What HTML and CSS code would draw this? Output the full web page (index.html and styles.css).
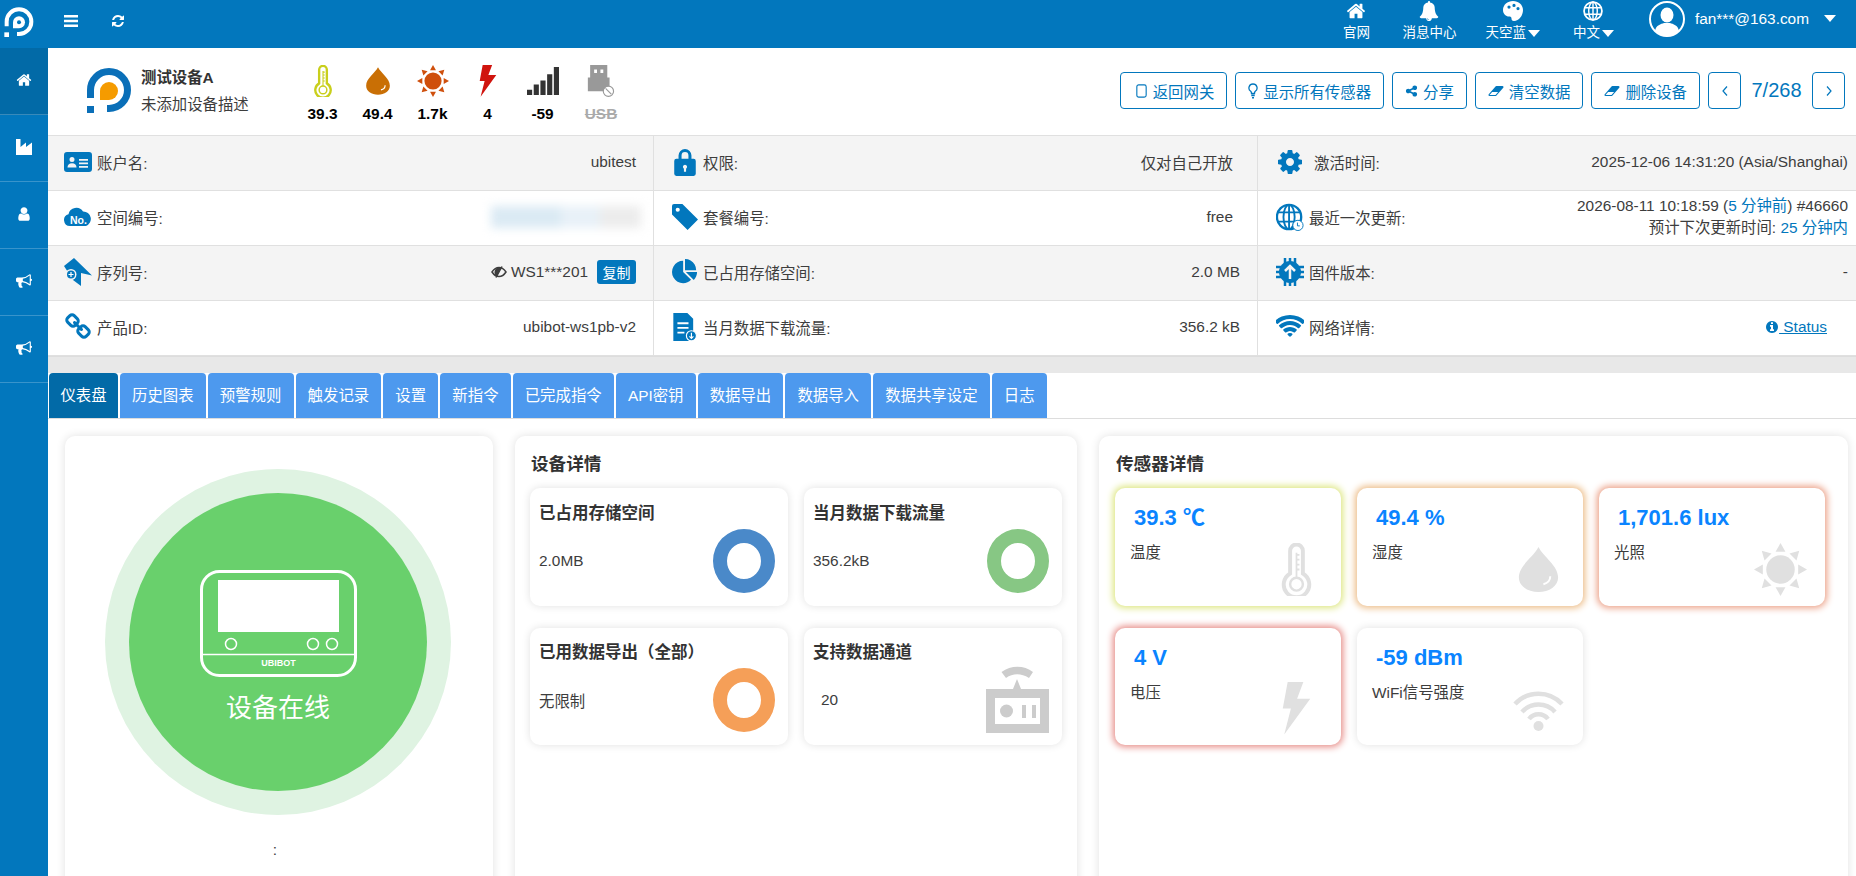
FILE: index.html
```html
<!DOCTYPE html>
<html lang="zh-CN">
<head>
  <meta charset="UTF-8">
  <meta name="viewport" content="width=device-width, initial-scale=1.0">
  <title>测试设备A</title>
  <link rel="stylesheet" href="styles.css">
</head>
<body>

<!-- icon sprite -->
<svg class="sprite" xmlns="http://www.w3.org/2000/svg">
  <symbol id="i-bars" viewBox="0 0 14 12"><path d="M0 0h14v2.4H0zM0 4.8h14v2.4H0zM0 9.600h14V12H0z"/></symbol>
  <symbol id="i-refresh" viewBox="0 0 1792 1792"><path d="M1639 1056q0 5-1 7-64 268-268 434.500t-478 166.500q-146 0-282.500-55t-243.500-157l-129 129q-19 19-45 19t-45-19-19-45v-448q0-26 19-45t45-19h448q26 0 45 19t19 45-19 45l-137 137q71 66 161 102t187 36q134 0 250-65t186-179q11-17 53-117 8-23 30-23h192q13 0 22.500 9.500t9.500 22.500zm25-800v448q0 26-19 45t-45 19h-448q-26 0-45-19t-19-45 19-45l138-138q-148-137-349-137-134 0-250 65t-186 179q-11 17-53 117-8 23-30 23h-199q-13 0-22.500-9.500t-9.500-22.500v-7q65-268 270-434.500t480-166.500q146 0 284 55.500t245 156.500l130-129q19-19 45-19t45 19 19 45z"/></symbol>
  <symbol id="i-home" viewBox="0 0 1792 1792"><path d="M1472 992v480q0 26-19 45t-45 19h-384v-384h-256v384h-384q-26 0-45-19t-19-45v-480q0-1 .5-3t.5-3l575-474 575 474q1 2 1 6zm223-69l-62 74q-8 9-21 11h-3q-13 0-21-7l-692-577-692 577q-12 8-24 7-13-2-21-11l-62-74q-8-10-7-23.500t11-21.500l719-599q32-26 76-26t76 26l244 204v-195q0-14 9-23t23-9h192q14 0 23 9t9 23v408l219 182q10 8 11 21.500t-7 23.500z"/></symbol>
  <symbol id="i-bell" viewBox="0 0 1792 1792"><path d="M912 1696q0-16-16-16-59 0-101.500-42.500t-42.500-101.500q0-16-16-16t-16 16q0 73 51.500 124.500t124.500 51.500q16 0 16-16zm816-288q0 52-38 90t-90 38h-448q0 106-75 181t-181 75-181-75-75-181h-448q-52 0-90-38t-38-90q50-42 91-88t85-119.500 74.500-158.500 50-206 19.500-260q0-152 117-282.500t307-158.500q-8-19-8-39 0-40 28-68t68-28 68 28 28 68q0 20-8 39 190 28 307 158.500t117 282.500q0 139 19.500 260t50 206 74.500 158.500 85 119.500 91 88z"/></symbol>
  <symbol id="i-user" viewBox="0 0 1792 1792"><path d="M1536 1399q0 109-62.500 187t-150.500 78h-854q-88 0-150.500-78t-62.500-187q0-85 8.500-160.500t31.500-152 58.500-131 94-89 134.500-34.500q131 128 313 128t313-128q76 0 134.500 34.500t94 89 58.500 131 31.500 152 8.500 160.500zm-256-887q0 159-112.500 271.500t-271.500 112.500-271.500-112.500-112.500-271.500 112.500-271.500 271.500-112.500 271.500 112.500 112.500 271.500z"/></symbol>
  <symbol id="i-bullhorn" viewBox="0 0 1792 1792"><path d="M1664 640q53 0 90.500 37.500t37.500 90.500-37.500 90.500-90.500 37.500v384q0 52-38 90t-90 38q-417-347-812-380-58 19-91 66t-31 100.500 40 92.500q-20 33-23 65.500t6 58 33.500 55 48 50 61.500 50.500q-29 58-111.500 83t-168.500 11.500-132-55.500q-7-23-29.500-87.500t-32-94.500-23-89-15-101 3.500-98.500 22-110.500h-122q-66 0-113-47t-47-113v-192q0-66 47-113t113-47h480q435 0 896-384 52 0 90 38t38 90v384zm-128 604v-954q-394 302-768 343v270q377 42 768 341z"/></symbol>
  <symbol id="i-industry" viewBox="0 0 16 16"><path d="M0 0h4.500v8L10 3.500V8l6-4.500V16H0z"/></symbol>
  <symbol id="i-palette" viewBox="0 0 20 20"><path fill-rule="evenodd" d="M10 0c5.500 0 10 3.800 10 9 0 5.500-4 11-9 11-2 0-2.500-1.200-2.500-2.500 0-1.500-1-2-2.500-2C3 15.500 0 13 0 9c0-5.200 4.500-9 10-9zM6 4.500a1.600 1.600 0 1 0 0 3.200 1.600 1.600 0 0 0 0-3.200zM11 2.800a1.600 1.600 0 1 0 0 3.200 1.600 1.600 0 0 0 0-3.200zM15 6a1.600 1.600 0 1 0 0 3.200A1.600 1.600 0 0 0 15 6z"/></symbol>
  <symbol id="i-globe" viewBox="0 0 28 28">
    <circle cx="14" cy="14" r="12.500" fill="none" stroke="currentColor" stroke-width="2.500"/>
    <ellipse cx="14" cy="14" rx="6" ry="12.500" fill="none" stroke="currentColor" stroke-width="2"/>
    <path d="M14 1v26M2 9.500h24M2 18.500h24" fill="none" stroke="currentColor" stroke-width="2"/>
  </symbol>
  <symbol id="i-globe-clock" viewBox="0 0 30 30">
    <circle cx="14" cy="15" r="13" fill="none" stroke="currentColor" stroke-width="2.500"/>
    <ellipse cx="14" cy="15" rx="6" ry="13" fill="none" stroke="currentColor" stroke-width="2"/>
    <path d="M14 2v26M2 10h24M2 20h24" fill="none" stroke="currentColor" stroke-width="2"/>
    <circle cx="23.500" cy="24" r="5.500" fill="#fff" stroke="currentColor" stroke-width="1"/>
    <path d="M23 21v3.500h2.500" fill="none" stroke="currentColor" stroke-width="1"/>
  </symbol>
  <symbol id="i-share" viewBox="0 0 1792 1792"><path d="M1344 1024q133 0 226.500 93.500t93.500 226.500-93.500 226.500-226.500 93.500-226.500-93.500-93.500-226.500q0-12 2-34l-360-180q-92 86-218 86-133 0-226.500-93.500t-93.500-226.500 93.500-226.500 226.500-93.500q126 0 218 86l360-180q-2-22-2-34 0-133 93.500-226.500t226.500-93.500 226.500 93.500 93.500 226.500-93.500 226.500-226.500 93.500q-126 0-218-86l-360 180q2 22 2 34t-2 34l360 180q92-86 218-86z"/></symbol>
  <symbol id="i-eraser" viewBox="0 0 2048 1792"><path d="M960 1408l336-384h-768l-336 384h768zm1013-1077q15 34 9.500 71.500t-30.500 65.500l-896 1024q-38 44-96 44h-768q-38 0-69.500-20.500t-47.500-54.500q-15-34-9.500-71.500t30.500-65.500l896-1024q38-44 96-44h768q38 0 70 20.500t47 54.500z"/></symbol>
  <symbol id="i-tablet" viewBox="0 0 12 15"><rect x="1" y="1" width="10" height="13" rx="2" fill="none" stroke="currentColor" stroke-width="1.200"/></symbol>
  <symbol id="i-bulb" viewBox="0 0 10 16"><path d="M5 1a4 4 0 0 0-2.300 7.300c.5.400.8 1.200.8 2.200h3c0-1 .3-1.800.8-2.200A4 4 0 0 0 5 1z" fill="none" stroke="currentColor" stroke-width="1.300"/><path d="M3.300 11.500h3.400v1.700H3.300zM4 14h2v1.500H4z"/></symbol>
  <symbol id="i-left" viewBox="0 0 8 12"><path d="M6 1.500L2 6l4 4.500" fill="none" stroke="currentColor" stroke-width="1.200"/></symbol>
  <symbol id="i-right" viewBox="0 0 8 12"><path d="M2 1.500L6 6l-4 4.500" fill="none" stroke="currentColor" stroke-width="1.200"/></symbol>
  <symbol id="i-idcard" viewBox="0 0 28 20"><path fill-rule="evenodd" d="M3 0h22a3 3 0 0 1 3 3v14a3 3 0 0 1-3 3H3a3 3 0 0 1-3-3V3a3 3 0 0 1 3-3zM8 5a2.500 2.500 0 1 0 0 5 2.500 2.500 0 0 0 0-5zM3.500 15.500h9c0-2.500-1.500-4.200-4.500-4.200s-4.500 1.700-4.500 4.200zM15 7v1.800h9V7zM15 10.500v1.800h9v-1.800zM15 14v1.800h9V14z"/></symbol>
  <symbol id="i-cloud" viewBox="0 0 28 18"><path d="M6 18a6 6 0 0 1-1.500-11.800A8 8 0 0 1 19 3.500 7.500 7.500 0 0 1 22 18z"/><text x="14.500" y="15.500" class="cloud-text">No.</text></symbol>
  <symbol id="i-serial" viewBox="0 0 28 28"><path d="M10 0l18 17.500L17 15v13l-8-6-9-14z"/><circle cx="7" cy="16.500" r="5.500" fill="#f4f4f4"/><circle cx="7" cy="16.500" r="4" fill="#0277bd"/><path d="M4.500 16.500h5M7 14v5" stroke="#fff" stroke-width="1.200"/></symbol>
  <symbol id="i-link" viewBox="0 0 1792 1792"><path d="M1520 1216q0-40-28-68l-208-208q-28-28-68-28-42 0-72 32 3 3 19 18.500t21.500 21.500 15 19 13 25.500 3.500 27.500q0 40-28 68t-68 28q-15 0-27.500-3.500t-25.500-13-19-15-21.500-21.500-18.500-19q-33 31-33 73 0 40 28 68l206 207q27 27 68 27 40 0 68-26l147-146q28-28 28-67zm-703-705q0-40-28-68l-206-207q-28-28-68-28-39 0-68 27l-147 146q-28 28-28 67 0 40 28 68l208 208q27 27 68 27 42 0 72-31-3-3-19-18.500t-21.500-21.500-15-19-13-25.500-3.500-27.500q0-40 28-68t68-28q15 0 27.500 3.500t25.500 13 19 15 21.500 21.500 18.500 19q33-31 33-73zm895 705q0 120-85 203l-147 146q-83 83-203 83-121 0-204-85l-206-207q-83-83-83-203 0-123 88-209l-88-88q-86 88-208 88-120 0-204-84l-208-208q-84-84-84-204t85-203l147-146q83-83 203-83 121 0 204 85l206 207q83 83 83 203 0 123-88 209l88 88q86-88 208-88 120 0 204 84l208 208q84 84 84 204z"/></symbol>
  <symbol id="i-lock" viewBox="0 0 20 26"><path fill-rule="evenodd" d="M4 10V7a6 6 0 0 1 12 0v3h2a2 2 0 0 1 2 2v12a2 2 0 0 1-2 2H2a2 2 0 0 1-2-2V12a2 2 0 0 1 2-2zM6.800 10h6.400V7a3.200 3.200 0 0 0-6.400 0zM10 15.500a2 2 0 0 0-1 3.700V22h2v-2.800a2 2 0 0 0-1-3.700z"/></symbol>
  <symbol id="i-tag" viewBox="0 0 25 25"><path fill-rule="evenodd" d="M0 2a2 2 0 0 1 2-2h8l15 15-10 10L0 10zM5.500 3.500a2 2 0 1 0 0 4 2 2 0 0 0 0-4z"/></symbol>
  <symbol id="i-pie" viewBox="0 0 1792 1792"><path d="M768 890l546 546q-106 108-247.500 168t-298.500 60q-209 0-385.500-103t-279.500-279.500-103-385.500 103-385.500 279.500-279.500 385.500-103v762zm187 6h773q0 157-60 298.500t-168 247.500zm709-128h-768v-768q209 0 385.500 103t279.500 279.500 103 385.500z"/></symbol>
  <symbol id="i-doc" viewBox="0 0 20 24"><path fill-rule="evenodd" d="M0 0h12l5 5v19H0zM3.500 8v1.600H13V8zM3.500 12v1.600H13V12zM3.500 16v1.600h6V16z"/><circle cx="15.500" cy="19.500" r="4.300" fill="#0277bd" stroke="#fff" stroke-width="1"/><path d="M15.500 17v4.500M13.800 20l1.700 1.700 1.700-1.700" fill="none" stroke="#fff" stroke-width="1"/></symbol>
  <symbol id="i-gear" viewBox="0 0 1792 1792"><path d="M1152 896q0-106-75-181t-181-75-181 75-75 181 75 181 181 75 181-75 75-181zm512-109v222q0 12-8 23t-20 13l-185 28q-19 54-39 91 35 50 107 138 10 12 10 25t-9 23q-27 37-99 108t-94 71q-12 0-26-9l-138-108q-44 23-91 38-16 136-29 186-7 28-36 28h-222q-14 0-24.500-8.500t-11.500-21.500l-28-184q-49-16-90-37l-141 107q-10 9-25 9-14 0-25-11-126-114-165-168-7-10-7-23 0-12 8-23 15-21 51-66.500t54-70.500q-27-50-41-99l-183-27q-13-2-21-12.500t-8-23.500v-222q0-12 8-23t19-13l186-28q14-46 39-92-40-57-107-138-10-12-10-24 0-10 9-23 26-36 98.500-107.500t94.500-71.500q13 0 26 10l138 107q44-23 91-38 16-136 29-186 7-28 36-28h222q14 0 24.500 8.500t11.500 21.500l28 184q49 16 90 37l142-107q9-9 24-9 13 0 25 10 129 119 165 170 7 8 7 22 0 12-8 23-15 21-51 66.500t-54 70.500q26 50 41 98l183 28q13 2 22 12.500t9 23.500z"/></symbol>
  <symbol id="i-chip" viewBox="0 0 28 28">
    <path d="M0 9h28M0 14h28M0 19h28M9 0v28M14 0v28M19 0v28" stroke="currentColor" stroke-width="2.500"/>
    <circle cx="14" cy="14" r="11"/>
    <path d="M14 21V8M9 13l5-5 5 5" fill="none" stroke="#f4f4f4" stroke-width="2.500"/>
  </symbol>
  <symbol id="i-wifi" viewBox="0 0 1792 1792"><path d="M896 1523q-20 0-93-73.500t-73-93.500q0-32 62.500-54t103.500-22 103.500 22 62.500 54q0 20-73 93.500t-93 73.500zm270-271q-2 0-40-25t-101.500-50-128.500-25-128.500 25-101 50-40.500 25q-18 0-93.500-75t-75.500-93q0-13 10-23 78-77 196-121t233-44 233 44 196 121q10 10 10 23 0 18-75.500 93t-93.500 75zm273-272q-11 0-23-8-136-105-252-154.500t-268-49.500q-85 0-170.500 22t-149 53-113.500 62-79 53-31 22q-17 0-92-75t-75-93q0-12 10-22 132-132 320-205t380-73 380 73 320 205q10 10 10 22 0 18-75 93t-92 75zm271-271q-11 0-22-9-179-157-371.500-236.500t-420.500-79.500-420.500 79.500-371.500 236.500q-11 9-22 9-17 0-92.500-75t-75.500-93q0-13 10-23 187-186 445-288t527-102 527 102 445 288q10 10 10 23 0 18-75.500 93t-92.500 75z"/></symbol>
  <symbol id="i-info" viewBox="0 0 1792 1792"><path d="M1152 1376v-160q0-14-9-23t-23-9h-96v-512q0-14-9-23t-23-9h-320q-14 0-23 9t-9 23v160q0 14 9 23t23 9h96v320h-96q-14 0-23 9t-9 23v160q0 14 9 23t23 9h448q14 0 23-9t9-23zm-128-896v-160q0-14-9-23t-23-9h-192q-14 0-23 9t-9 23v160q0 14 9 23t23 9h192q14 0 23-9t9-23zm640 416q0 209-103 385.500t-279.500 279.500-385.500 103-385.500-103-279.500-279.500-103-385.500 103-385.500 279.500-279.500 385.500-103 385.500 103 279.500 279.500 103 385.500z"/></symbol>
  <symbol id="i-eye-off" viewBox="0 0 16 12"><path d="M1 6c2-3 4.500-4.500 7-4.500S13 3 15 6c-2 3-4.500 4.500-7 4.500S3 9 1 6z" fill="none" stroke="currentColor" stroke-width="1.500"/><path d="M3.500 6a4.500 4.500 0 0 1 6.500-4L6 10.500A4.500 4.500 0 0 1 3.500 6z"/><path d="M5 11.500L11 .5" stroke="currentColor" stroke-width="1.500"/></symbol>
  <symbol id="i-thermo" viewBox="0 0 30 54">
    <path d="M8.500 31V8a6.500 6.500 0 0 1 13 0v23a13 13 0 1 1-13 0z" fill="none" stroke="currentColor" stroke-width="4"/>
    <circle cx="15" cy="42" r="6.500" fill="none" stroke="currentColor" stroke-width="2.500"/>
    <path d="M15 10v26M15 12h3M15 17h3M15 22h3M15 27h3" fill="none" stroke="currentColor" stroke-width="1.800"/>
  </symbol>
  <symbol id="i-drop" viewBox="-6 -4 54 54"><path d="M21 0C26 10 41 19 41 31 41 40 32 46 21 46S1 40 1 31C1 19 16 10 21 0z"/><path d="M33 30c0 4-3 7-7 8" fill="none" stroke="#fff" stroke-width="2"/></symbol>
  <symbol id="i-sun" viewBox="0 0 54 54">
    <circle cx="27" cy="27" r="14.500"/>
    <polygon points="27,0 32,9 22,9"/>
    <polygon points="27,0 32,9 22,9" transform="rotate(45 27 27)"/>
    <polygon points="27,0 32,9 22,9" transform="rotate(90 27 27)"/>
    <polygon points="27,0 32,9 22,9" transform="rotate(135 27 27)"/>
    <polygon points="27,0 32,9 22,9" transform="rotate(180 27 27)"/>
    <polygon points="27,0 32,9 22,9" transform="rotate(225 27 27)"/>
    <polygon points="27,0 32,9 22,9" transform="rotate(270 27 27)"/>
    <polygon points="27,0 32,9 22,9" transform="rotate(315 27 27)"/>
  </symbol>
  <symbol id="i-bolt" viewBox="0 0 28 54"><polygon points="5,0 21,0 14.600,17 28,17 1.500,53.500 8.300,27 0,27"/></symbol>
  <symbol id="i-signal" viewBox="0 0 31 27"><path d="M0 22h5v5H0zM6.500 17h5v10h-5zM13 13h5v14h-5zM19.500 7h5v20h-5zM26 0h5v27h-5z"/></symbol>
  <symbol id="i-usb" viewBox="0 0 23 28"><path fill-rule="evenodd" d="M2 0h15v11h2v12H0V11h2zM5.500 4v3h2.500V4zM11 4v3h2.500V4z"/><circle cx="18" cy="23" r="4.500" fill="#fff" stroke="currentColor" stroke-width="1"/><path d="M15.500 20.500l5 5" stroke="currentColor"/></symbol>
  <symbol id="i-sig-wifi" viewBox="0 0 53 53">
    <path d="M3 22a32 32 0 0 1 47 0M10 30a22 22 0 0 1 33 0M17 37a12 12 0 0 1 19 0" fill="none" stroke="currentColor" stroke-width="4.500"/>
    <circle cx="26.500" cy="44" r="5"/>
  </symbol>
  <symbol id="i-radio" viewBox="0 0 63 69">
    <path d="M15.500 8C25 1 38 1 47 8l-4 6C35 9 27 9 20 14z"/>
    <path d="M31 15l4 10H27z"/>
    <path fill-rule="evenodd" d="M0 25h63v44H0zM9 34v26h45V34z"/>
    <circle cx="20.500" cy="47" r="6.500"/>
    <path d="M36 41h4v13h-4zM46 41h4v13h-4z"/>
  </symbol>
</svg>

<header class="topbar">
  <svg class="top-logo" viewBox="0 0 44 45" width="30" height="30">
    <path d="M3.500 29V22A18.500 18.500 0 1 1 22 40.500H19" fill="none" stroke="#fff" stroke-width="6"/>
    <path d="M0 38h7v7H0z" fill="#fff"/>
    <path d="M13 32V23a9 9 0 1 1 9 9z" fill="#fff"/>
    <circle cx="22" cy="23" r="3" fill="#0277bd"/>
  </svg>
  <svg class="top-btn top-bars"><use href="#i-bars"/></svg>
  <svg class="top-btn top-refresh"><use href="#i-refresh"/></svg>

  <nav class="top-nav">
    <a class="nav-item nav-site"><svg class="nav-icon"><use href="#i-home"/></svg><span>官网</span></a>
    <a class="nav-item"><svg class="nav-icon"><use href="#i-bell"/></svg><span>消息中心</span></a>
    <a class="nav-item"><svg class="nav-icon"><use href="#i-palette"/></svg><span>天空蓝<i class="caret"></i></span></a>
    <a class="nav-item nav-lang"><svg class="nav-icon"><use href="#i-globe"/></svg><span>中文<i class="caret"></i></span></a>
  </nav>

  <div class="account">
    <span class="avatar"><svg viewBox="0 0 36 36" width="36" height="36"><circle cx="18" cy="18" r="17" fill="#0277bd" stroke="#fff" stroke-width="2"/><ellipse cx="18" cy="14" rx="6.500" ry="7.500" fill="#fff"/><path d="M6 30c1-6 6-7 9-8h6c3 1 8 2 9 8a16 16 0 0 1-24 0z" fill="#fff"/></svg></span>
    <span class="account-mail">fan***@163.com</span>
    <i class="caret caret-account"></i>
  </div>
</header>

<div class="layout">
  <aside class="sidebar">
    <a class="side-item active"><svg class="side-icon"><use href="#i-home"/></svg></a>
    <a class="side-item"><svg class="side-icon"><use href="#i-industry"/></svg></a>
    <a class="side-item"><svg class="side-icon"><use href="#i-user"/></svg></a>
    <a class="side-item"><svg class="side-icon"><use href="#i-bullhorn"/></svg></a>
    <a class="side-item"><svg class="side-icon"><use href="#i-bullhorn"/></svg></a>
  </aside>

  <main class="content">
    <!-- Device header -->
    <section class="device-head">
      <svg class="device-logo" viewBox="0 0 44 45" width="44" height="45">
        <path d="M3.500 30V22A18.500 18.500 0 1 1 22 40.500H20" fill="none" stroke="#0a6fb8" stroke-width="7"/>
        <path d="M0 38h7v7H0z" fill="#0a6fb8"/>
        <path d="M13 32V23a9 9 0 1 1 9 9z" fill="#f59b00"/>
      </svg>
      <div class="device-name">
        <div class="device-title">测试设备A</div>
        <div class="device-desc">未添加设备描述</div>
      </div>

      <div class="readings">
        <div class="reading"><svg class="reading-icon c-temp"><use href="#i-thermo"/></svg><b>39.3</b></div>
        <div class="reading"><svg class="reading-icon c-hum"><use href="#i-drop"/></svg><b>49.4</b></div>
        <div class="reading"><svg class="reading-icon c-sun"><use href="#i-sun"/></svg><b>1.7k</b></div>
        <div class="reading"><svg class="reading-icon c-bolt"><use href="#i-bolt"/></svg><b>4</b></div>
        <div class="reading"><svg class="reading-icon c-signal"><use href="#i-signal"/></svg><b>-59</b></div>
        <div class="reading reading-off"><svg class="reading-icon c-usb"><use href="#i-usb"/></svg><b>USB</b></div>
      </div>

      <div class="actions">
        <button class="btn"><svg class="btn-icon btn-tablet"><use href="#i-tablet"/></svg>返回网关</button>
        <button class="btn"><svg class="btn-icon btn-bulb"><use href="#i-bulb"/></svg>显示所有传感器</button>
        <button class="btn"><svg class="btn-icon"><use href="#i-share"/></svg>分享</button>
        <button class="btn"><svg class="btn-icon btn-eraser"><use href="#i-eraser"/></svg>清空数据</button>
        <button class="btn"><svg class="btn-icon btn-eraser"><use href="#i-eraser"/></svg>删除设备</button>
        <button class="btn btn-page"><svg class="btn-chevron"><use href="#i-left"/></svg></button>
        <span class="page-count">7/268</span>
        <button class="btn btn-page"><svg class="btn-chevron"><use href="#i-right"/></svg></button>
      </div>
    </section>

    <!-- Info table -->
    <section class="info">
      <div class="info-row">
        <div class="cell"><svg class="cell-icon"><use href="#i-idcard"/></svg><span>账户名:</span><span class="cell-value">ubitest</span></div>
        <div class="cell"><svg class="cell-icon"><use href="#i-lock"/></svg><span>权限:</span><span class="cell-value">仅对自己开放</span></div>
        <div class="cell"><svg class="cell-icon icon-gear"><use href="#i-gear"/></svg><span>激活时间:</span><span class="cell-value">2025-12-06 14:31:20 (Asia/Shanghai)</span></div>
      </div>
      <div class="info-row">
        <div class="cell"><svg class="cell-icon"><use href="#i-cloud"/></svg><span>空间编号:</span><span class="cell-value blurred"><i class="blur-a"></i><i class="blur-b"></i><i class="blur-c"></i></span></div>
        <div class="cell"><svg class="cell-icon"><use href="#i-tag"/></svg><span>套餐编号:</span><span class="cell-value">free</span></div>
        <div class="cell"><svg class="cell-icon"><use href="#i-globe-clock"/></svg><span>最近一次更新:</span>
          <div class="cell-value update">
            <div>2026-08-11 10:18:59 (<a class="link">5 分钟前</a>) #46660</div>
            <div>预计下次更新时间: <a class="link">25 分钟内</a></div>
          </div>
        </div>
      </div>
      <div class="info-row">
        <div class="cell"><svg class="cell-icon"><use href="#i-serial"/></svg><span>序列号:</span>
          <span class="cell-value serial"><svg class="eye"><use href="#i-eye-off"/></svg>WS1***201<button class="copy">复制</button></span>
        </div>
        <div class="cell"><svg class="cell-icon"><use href="#i-pie"/></svg><span>已占用存储空间:</span><span class="cell-value value-wide">2.0 MB</span></div>
        <div class="cell"><svg class="cell-icon"><use href="#i-chip"/></svg><span>固件版本:</span><span class="cell-value">-</span></div>
      </div>
      <div class="info-row">
        <div class="cell"><svg class="cell-icon"><use href="#i-link"/></svg><span>产品ID:</span><span class="cell-value">ubibot-ws1pb-v2</span></div>
        <div class="cell"><svg class="cell-icon"><use href="#i-doc"/></svg><span>当月数据下载流量:</span><span class="cell-value value-wide">356.2 kB</span></div>
        <div class="cell"><svg class="cell-icon"><use href="#i-wifi"/></svg><span>网络详情:</span><a class="cell-value link status"><svg class="info-icon"><use href="#i-info"/></svg> Status</a></div>
      </div>
    </section>
    <div class="band"></div>

    <!-- Tabs -->
    <nav class="tabs">
      <a class="tab active">仪表盘</a>
      <a class="tab">历史图表</a>
      <a class="tab">预警规则</a>
      <a class="tab">触发记录</a>
      <a class="tab">设置</a>
      <a class="tab">新指令</a>
      <a class="tab">已完成指令</a>
      <a class="tab">API密钥</a>
      <a class="tab">数据导出</a>
      <a class="tab">数据导入</a>
      <a class="tab">数据共享设定</a>
      <a class="tab">日志</a>
    </nav>

    <!-- Dashboard -->
    <section class="dashboard">
      <div class="panel panel-status">
        <div class="ring">
          <div class="ring-inner">
            <svg class="device-art" viewBox="0 0 157 107" width="157" height="107">
              <rect x="1.500" y="1.500" width="154" height="104" rx="18" fill="none" stroke="#fff" stroke-width="3"/>
              <rect x="18" y="10" width="121" height="52" fill="#fff"/>
              <circle cx="31" cy="74" r="5.500" fill="none" stroke="#fff" stroke-width="1.500"/>
              <circle cx="113" cy="74" r="5.500" fill="none" stroke="#fff" stroke-width="1.500"/>
              <circle cx="132" cy="74" r="5.500" fill="none" stroke="#fff" stroke-width="1.500"/>
              <path d="M2 84.500h153" stroke="#fff" stroke-width="1.500"/>
              <text x="78.500" y="96" class="art-text">UBIBOT</text>
            </svg>
            <div class="ring-text">设备在线</div>
          </div>
        </div>
        <div class="status-colon">:</div>
      </div>

      <div class="panel">
        <h3 class="panel-title">设备详情</h3>
        <div class="usage-grid">
          <div class="usage-card">
            <div class="usage-title">已占用存储空间</div>
            <div class="usage-row"><span>2.0MB</span><div class="donut donut-blue"></div></div>
          </div>
          <div class="usage-card">
            <div class="usage-title">当月数据下载流量</div>
            <div class="usage-row"><span>356.2kB</span><div class="donut donut-green"></div></div>
          </div>
          <div class="usage-card">
            <div class="usage-title">已用数据导出（全部）</div>
            <div class="usage-row"><span>无限制</span><div class="donut donut-orange"></div></div>
          </div>
          <div class="usage-card">
            <div class="usage-title">支持数据通道</div>
            <div class="usage-row"><span class="usage-count">20</span><svg class="radio-icon"><use href="#i-radio"/></svg></div>
          </div>
        </div>
      </div>

      <div class="panel panel-sensors">
        <h3 class="panel-title">传感器详情</h3>
        <div class="sensor-grid">
          <div class="sensor glow-yellow">
            <div class="sensor-text"><div class="sensor-value">39.3 ℃</div><div class="sensor-name">温度</div></div>
            <svg class="sensor-icon"><use href="#i-thermo"/></svg>
          </div>
          <div class="sensor glow-orange">
            <div class="sensor-text"><div class="sensor-value">49.4 %</div><div class="sensor-name">湿度</div></div>
            <svg class="sensor-icon"><use href="#i-drop"/></svg>
          </div>
          <div class="sensor glow-coral">
            <div class="sensor-text"><div class="sensor-value">1,701.6 lux</div><div class="sensor-name">光照</div></div>
            <svg class="sensor-icon"><use href="#i-sun"/></svg>
          </div>
          <div class="sensor glow-red">
            <div class="sensor-text"><div class="sensor-value">4 V</div><div class="sensor-name">电压</div></div>
            <svg class="sensor-icon"><use href="#i-bolt"/></svg>
          </div>
          <div class="sensor">
            <div class="sensor-text"><div class="sensor-value">-59 dBm</div><div class="sensor-name">WiFi信号强度</div></div>
            <svg class="sensor-icon"><use href="#i-sig-wifi"/></svg>
          </div>
        </div>
      </div>
    </section>
  </main>
</div>

</body>
</html>
```

FILE: styles.css
```css
* {
  box-sizing: border-box;
}

html,
body {
  height: 100%;
}

body {
  margin: 0;
  overflow: hidden;
  font-family: "Liberation Sans", "Noto Sans CJK SC", sans-serif;
  font-size: 15.4px;
  color: #3d3d3d;
  background-color: #fff;
}

.sprite {
  display: none;
}

/* top bar */
.topbar {
  display: flex;
  align-items: flex-start;
  height: 48px;
  background-color: #0277bd;
  color: #fff;
  fill: #fff;
}

.top-logo {
  margin: 7px 0 0 4px;
}

.top-btn {
  width: 14px;
  height: 14px;
}

.top-bars {
  margin: 14px 0 0 30px;
}

.top-refresh {
  margin: 14px 0 0 33px;
}

.top-nav {
  display: flex;
  gap: 29px;
  margin-left: auto;
}

.nav-item {
  display: flex;
  flex-direction: column;
  align-items: center;
  font-size: 13.5px;
  line-height: 18px;
}

.nav-site {
  min-width: 34px;
}

.nav-lang {
  margin-left: 4px;
}

.nav-icon {
  width: 22px;
  height: 20px;
  margin: 1px 0 3px;
}

.caret {
  display: inline-block;
  margin-left: 2px;
  border-top: 7px solid #fff;
  border-left: 6px solid transparent;
  border-right: 6px solid transparent;
  vertical-align: 0;
}

.account {
  display: flex;
  align-items: center;
  height: 37px;
  margin-left: 35px;
  padding-right: 20px;
}

.avatar {
  display: flex;
  margin-right: 10px;
}

.caret-account {
  margin-left: 15px;
}

/* page frame */
.layout {
  display: flex;
  height: 828px;
}

.sidebar {
  flex: none;
  width: 48px;
  background-color: #0277bd;
  fill: #fff;
}

.side-item {
  display: flex;
  align-items: center;
  justify-content: center;
  height: 67px;
  padding-bottom: 2px;
  border-bottom: 1px solid rgba(255, 255, 255, 0.22);
}

.side-item.active {
  background-color: #026aa7;
}

.side-icon {
  width: 16px;
  height: 16px;
}

.content {
  flex: 1;
  min-width: 0;
}

/* device header */
.device-head {
  display: flex;
  align-items: flex-start;
  height: 87px;
}

.device-logo {
  margin: 20px 0 0 39px;
}

.device-name {
  width: 154px;
  margin: 20px 0 0 10px;
}

.device-title {
  font-weight: bold;
  line-height: 20px;
  color: #333;
}

.device-desc {
  margin-top: 7px;
  line-height: 20px;
}

.readings {
  display: flex;
  margin-top: 17px;
}

.reading {
  display: flex;
  flex-direction: column;
  align-items: center;
  width: 55px;
  color: #000;
}

.reading b {
  margin-top: 7px;
  line-height: 20px;
}

.reading-off {
  width: 60px;
  margin-left: 1px;
}

.reading-off b {
  color: #aaa;
  text-decoration: line-through;
}

.reading-icon {
  width: 32px;
  height: 32px;
}

.c-temp {
  color: #c9cf1c;
}

.c-hum {
  fill: #c96f05;
}

.c-sun {
  fill: #cf4f0c;
}

.c-bolt {
  fill: #d0140e;
}

.c-signal {
  fill: #333;
}

.c-usb {
  color: #999;
  fill: #999;
}

.actions {
  display: flex;
  align-items: center;
  gap: 8px;
  margin: 24px 11px 0 auto;
}

.btn {
  display: flex;
  align-items: center;
  justify-content: center;
  height: 37px;
  padding: 0 12px;
  border: 1px solid #0277bd;
  border-radius: 4px;
  background-color: #fff;
  color: #0277bd;
  fill: #0277bd;
  font: inherit;
}

.btn-icon {
  width: 13px;
  height: 14px;
  margin-right: 5px;
}

.btn-tablet {
  margin-left: 2px;
}

.btn-bulb {
  width: 10px;
  height: 16px;
}

.btn-eraser {
  width: 16px;
}

.btn-page {
  width: 33px;
  padding: 0;
}

.btn-chevron {
  width: 8px;
  height: 12px;
}

.page-count {
  width: 55px;
  text-align: center;
  font-size: 20px;
  color: #0277bd;
}

/* info table */
.info {
  border-top: 1px solid #e0e0e0;
}

.info-row {
  display: grid;
  grid-template-columns: 606px 604px 1fr;
  height: 55px;
  border-bottom: 1px solid #e0e0e0;
}

.info-row:nth-child(odd) {
  background-color: #f4f4f4;
}

.cell {
  display: flex;
  align-items: center;
  padding: 0 17px 2px 16px;
  border-right: 1px solid #e0e0e0;
  fill: #0277bd;
}

.cell + .cell {
  padding: 0 24px 2px 18px;
}

.cell + .cell + .cell {
  padding: 0 8px 2px 18px;
  border-right: none;
}

.cell-icon {
  flex: none;
  width: 28px;
  height: 28px;
  margin-right: 5px;
  color: #0277bd;
}

.cell + .cell .cell-icon {
  width: 26px;
}

.cell + .cell + .cell .cell-icon {
  width: 28px;
}

.cell + .cell + .cell .icon-gear {
  margin-right: 10px;
}

.cloud-text {
  font-size: 10.5px;
  font-weight: bold;
  fill: #fff;
  text-anchor: middle;
}

.cell-value {
  margin-left: auto;
  text-align: right;
}

.value-wide {
  margin-right: -7px;
}

.link {
  color: #0277bd;
}

.update {
  line-height: 22px;
}

.blurred {
  display: flex;
  width: 150px;
  height: 22px;
  margin-right: -5px;
  filter: blur(5px);
}

.blurred i {
  display: block;
  height: 100%;
}

.blur-a {
  flex: 2.2;
  background-color: #dbeaf4;
}

.blur-b {
  flex: 1.2;
  background-color: #e8f1f8;
}

.blur-c {
  flex: 1.3;
  background-color: #ececec;
}

.serial {
  display: flex;
  align-items: center;
}

.eye {
  width: 16px;
  height: 12px;
  margin-right: 4px;
  color: #3d3d3d;
  fill: #3d3d3d;
}

.copy {
  width: 39px;
  height: 24px;
  margin-left: 9px;
  padding: 0;
  border: none;
  border-radius: 3px;
  background-color: #0277bd;
  color: #fff;
  font: 14px "Liberation Sans", "Noto Sans CJK SC", sans-serif;
}

.status {
  margin-right: 21px;
  text-decoration: underline;
  fill: #0277bd;
}

.info-icon {
  width: 14px;
  height: 14px;
  vertical-align: -2px;
}

.band {
  height: 17px;
  border-top: 1px solid #ddd;
  background-color: #e8e8e8;
}

/* tabs */
.tabs {
  display: flex;
  gap: 2px;
  height: 46px;
  padding-left: 1px;
  border-bottom: 1px solid #ddd;
}

.tab {
  padding: 0 12.1px;
  border-radius: 4px 4px 0 0;
  background-color: #4d99ee;
  color: #fff;
  line-height: 45px;
}

.tab.active {
  padding: 0 11.4px;
  background-color: #026aa7;
}

/* dashboard panels */
.dashboard {
  display: grid;
  grid-template-columns: 428px 562px 749px;
  gap: 22px;
  padding: 17px 0 0 17px;
}

.panel {
  min-height: 460px;
  padding: 16px 15px 0;
  border-radius: 10px;
  background-color: #fff;
  box-shadow: 0 0 10px rgba(0, 0, 0, 0.12);
}

.panel-title {
  margin: 0 0 12px 1px;
  font-size: 17.6px;
  line-height: 24px;
  color: #333;
}

.panel-status {
  display: flex;
  flex-direction: column;
  align-items: center;
  padding: 33px 2px 0 0;
}

.ring {
  display: flex;
  align-items: center;
  justify-content: center;
  width: 346px;
  height: 346px;
  border-radius: 50%;
  background-color: #dff3e2;
}

.ring-inner {
  display: flex;
  flex-direction: column;
  align-items: center;
  justify-content: center;
  width: 298px;
  height: 298px;
  padding-top: 10px;
  border-radius: 50%;
  background-color: #69d06c;
}

.art-text {
  font-size: 9px;
  font-weight: bold;
  fill: #fff;
  text-anchor: middle;
}

.ring-text {
  margin-top: 15px;
  font-size: 26px;
  line-height: 32px;
  color: #fff;
}

.status-colon {
  margin: 25px 6px 0 0;
  line-height: 20px;
}

.usage-grid {
  display: grid;
  grid-template-columns: 258px 258px;
  grid-template-rows: 118px 117px;
  gap: 22px 16px;
}

.usage-card {
  display: flex;
  flex-direction: column;
  justify-content: flex-end;
  padding: 0 13px 13px 9px;
  border-radius: 10px;
  box-shadow: 0 0 8px rgba(0, 0, 0, 0.12);
}

.usage-title {
  font-size: 16.5px;
  font-weight: bold;
  line-height: 20px;
  color: #333;
  transform: translateY(1px);
}

.usage-row {
  display: flex;
  align-items: center;
  justify-content: space-between;
  height: 64px;
  margin-top: 7px;
}

.usage-count {
  margin-left: 8px;
}

.donut {
  width: 62px;
  height: 64px;
  border: 14px solid;
  border-radius: 50%;
}

.donut-blue {
  border-color: #4a89c9;
}

.donut-green {
  border-color: #87c784;
}

.donut-orange {
  border-color: #f59f58;
}

.radio-icon {
  width: 63px;
  height: 69px;
  margin-top: -3px;
  fill: #ccc;
}

.sensor-grid {
  display: grid;
  grid-template-columns: repeat(3, 226px);
  grid-template-rows: 118px 117px;
  gap: 22px 16px;
}

.panel-sensors {
  padding-left: 16px;
}

.sensor {
  display: flex;
  justify-content: space-between;
  border-radius: 10px;
  box-shadow: 0 0 8px rgba(0, 0, 0, 0.12);
}

.glow-yellow {
  box-shadow: 0 0 7px 2px #dde67f;
}

.glow-orange {
  box-shadow: 0 0 7px 2px #ecbb85;
}

.glow-coral {
  box-shadow: 0 0 7px 2px #eb9f85;
}

.glow-red {
  box-shadow: 0 0 7px 2px #e68a85;
}

.sensor-text {
  padding: 18px 0 0 15px;
}

.sensor-value {
  padding-left: 4px;
  font-size: 22px;
  font-weight: bold;
  line-height: 24px;
  color: #0a84ff;
}

.sensor-name {
  margin-top: 13px;
  line-height: 20px;
}

.sensor-icon {
  align-self: flex-end;
  width: 53px;
  height: 53px;
  margin: 0 18px 10px 0;
  color: #e0e0e0;
  fill: #e0e0e0;
}
```
